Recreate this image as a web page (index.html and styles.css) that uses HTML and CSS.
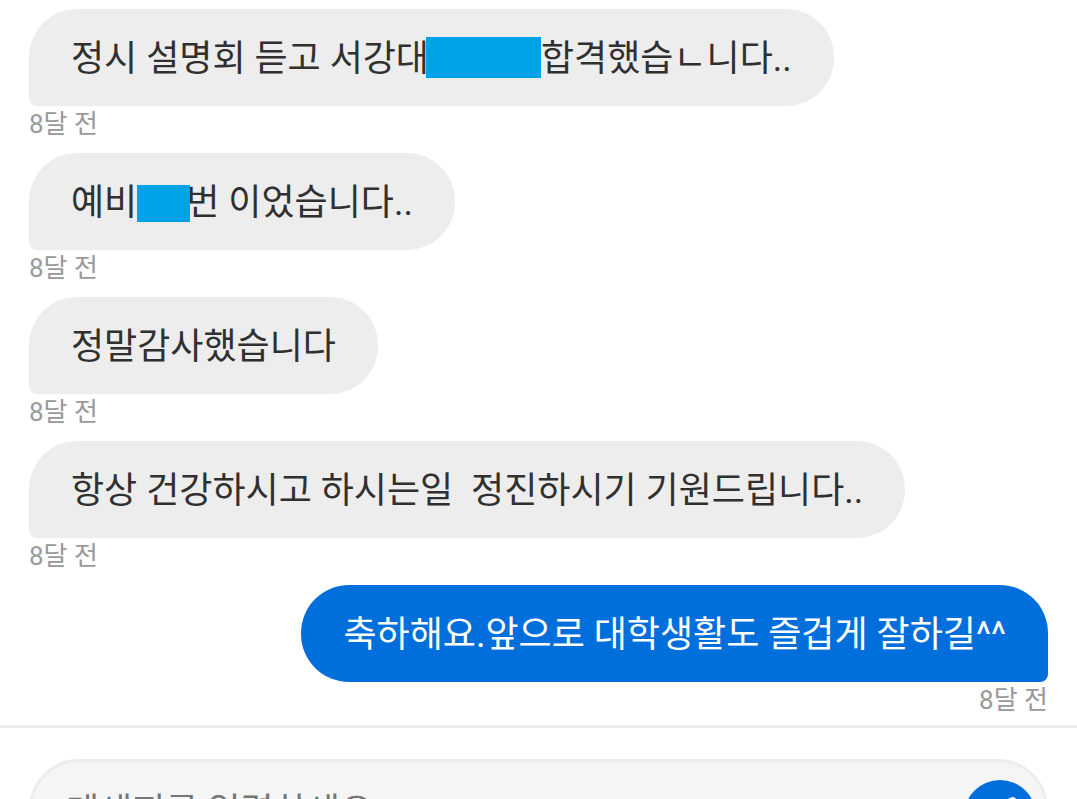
FILE: index.html
```html
<!DOCTYPE html>
<html lang="ko">
<head>
<meta charset="utf-8">
<meta name="viewport" content="width=device-width, initial-scale=1">
<title>메세지</title>
<link rel="stylesheet" href="styles.css">
</head>
<body>
<div class="chat">
  <main class="messages">
    <article class="message">
      <p class="bubble">정시 설명회 듣고 서강대<span class="redact redact-long"></span>합격했습ㄴ니다..</p>
      <time class="time">8달 전</time>
    </article>
    <article class="message">
      <p class="bubble">예비<span class="redact redact-short"></span>번 이었습니다..</p>
      <time class="time">8달 전</time>
    </article>
    <article class="message">
      <p class="bubble">정말감사했습니다</p>
      <time class="time">8달 전</time>
    </article>
    <article class="message">
      <p class="bubble">항상 건강하시고 하시는일&nbsp; 정진하시기 기원드립니다..</p>
      <time class="time">8달 전</time>
    </article>
    <article class="message message-own">
      <p class="bubble">축하해요.앞으로 대학생활도 즐겁게 잘하길^^</p>
      <time class="time">8달 전</time>
    </article>
  </main>
  <form class="composer">
    <div class="field">
      <input class="input" type="text" placeholder="메세지를 입력하세요" aria-label="메세지를 입력하세요">
      <button class="send" type="button" aria-label="보내기">
        <svg class="send-icon" viewBox="0 0 40 40" aria-hidden="true">
          <path d="M33 4 5 16l11 7 7 12z" fill="#fff" stroke="#fff" stroke-width="6" stroke-linejoin="round"/>
          <path d="M16 23 26 12" stroke="#006fdb" stroke-width="3" stroke-linecap="round"/>
        </svg>
      </button>
    </div>
  </form>
</div>
</body>
</html>
```
FILE: styles.css
```css
* {
  box-sizing: border-box;
}

body {
  margin: 0;
  background: #fff;
  color: #303030;
  font-family: Roboto, "Noto Sans CJK KR", sans-serif;
}

.chat {
  height: 100vh;
  overflow: hidden;
}

.messages {
  display: flex;
  flex-direction: column;
  gap: 11px;
  padding: 9px 29px 7px;
}

.message {
  display: flex;
  flex-direction: column;
  align-items: flex-start;
}

.message-own {
  align-items: flex-end;
}

.bubble {
  margin: 0;
  padding: 26px 42px 23px;
  border-radius: 48px 48px 48px 8px;
  background: #ededed;
  font-size: 36px;
  line-height: 48px;
}

.message-own .bubble {
  border-radius: 48px 48px 8px 48px;
  background: #006fdb;
  color: #fff;
}

.redact {
  display: inline-block;
  position: relative;
  vertical-align: middle;
  background: #00a2e8;
}

.redact-long {
  width: 115px;
  height: 41px;
  margin: -4px 0 4px -3px;
}

.redact-short {
  width: 53px;
  height: 37px;
  margin: -2px -4px 2px 0;
}

.time {
  color: #999;
  font-size: 26px;
  line-height: 36px;
}

.composer {
  padding: 31px 29px;
  border-top: 3px solid #ededed;
}

.field {
  display: flex;
  align-items: center;
  height: 114px;
  padding: 0 9px 0 34px;
  border: 3px solid #ededed;
  border-radius: 50px;
  background: #f5f5f5;
}

.input {
  flex: 1;
  min-width: 0;
  height: 96px;
  padding: 0 0 8px;
  border: 0;
  outline: 0;
  background: none;
  color: #303030;
  font: inherit;
  font-size: 36px;
}

.input::placeholder {
  color: #757575;
}

.send {
  display: flex;
  align-items: center;
  justify-content: center;
  width: 72px;
  height: 72px;
  padding: 0;
  border: 0;
  border-radius: 50%;
  background: #006fdb;
}

.send-icon {
  width: 40px;
  height: 40px;
}
```
